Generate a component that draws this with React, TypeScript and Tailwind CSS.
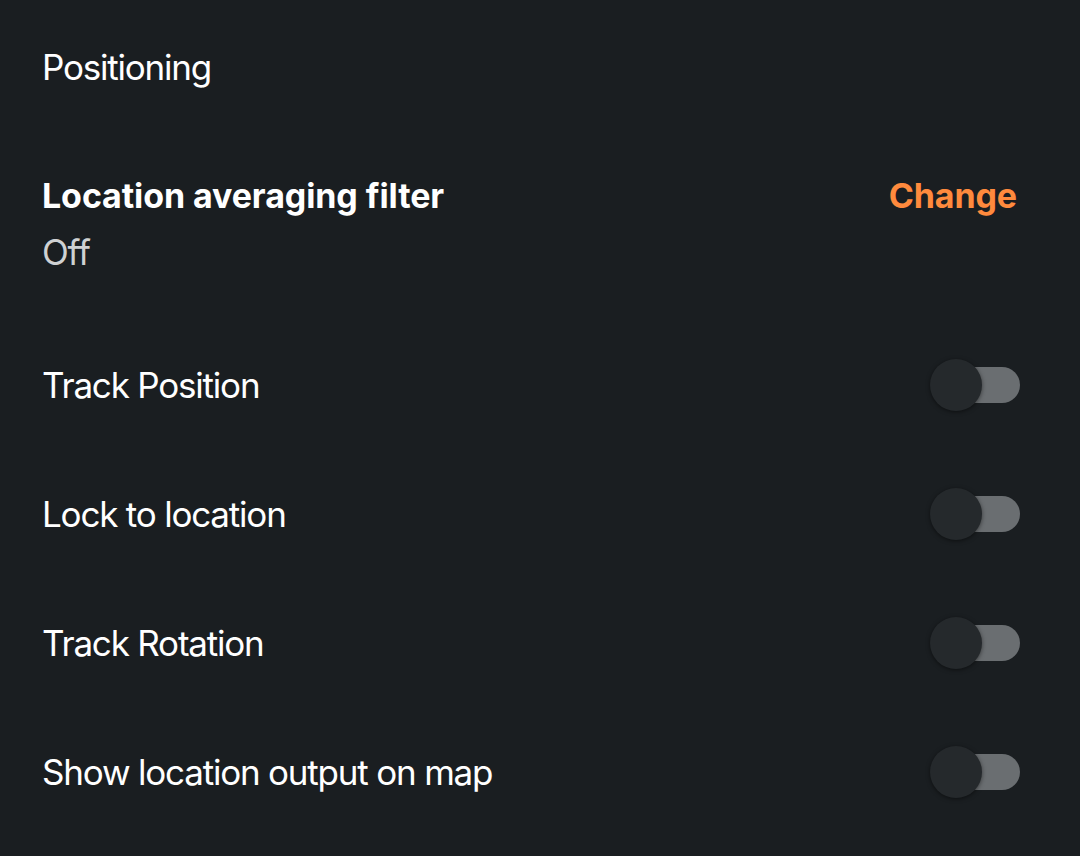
import React from "react";

function Toggle() {
  return (
    <div className="relative w-[90px] h-[54px] flex items-center">
      <div className="absolute left-[3px] right-0 h-[36px] rounded-full bg-[#6a6e71]" />
      <div className="absolute left-0 w-[52px] h-[52px] rounded-full bg-[#25292c] shadow-[0_1px_4px_rgba(0,0,0,0.5)]" />
    </div>
  );
}

const rows = ["Track Position", "Lock to location", "Track Rotation", "Show location output on map"];

export default function App() {
  return (
    <div
      className="w-[1080px] h-[856px] bg-[#1a1e21] text-white overflow-hidden"
      style={{ fontFamily: "Inter, 'Noto Sans', sans-serif" }}
    >
      <div className="h-[134px] flex items-center pl-[42px]">
        <span className="text-[35px] leading-[40px] tracking-[-1.2px]">Positioning</span>
      </div>
      <div className="h-[186px] pl-[42px] pr-[63px] pt-[42px]">
        <div className="flex justify-between items-center h-[40px]">
          <span className="text-[34px] font-bold leading-[40px] tracking-[-0.1px]">Location averaging filter</span>
          <span className="text-[34px] font-bold leading-[40px] tracking-[-0.1px] text-[#ff8a3d]">Change</span>
        </div>
        <div className="mt-[16px] h-[40px] flex items-center">
          <span className="text-[35px] leading-[40px] tracking-[-1.2px] text-[#cfd1d2]">Off</span>
        </div>
      </div>
      {rows.map((r) => (
        <div key={r} className="h-[129px] flex items-center justify-between pl-[42px] pr-[60px]">
          <span className="text-[35px] leading-[40px] tracking-[-1.2px]">{r}</span>
          <Toggle />
        </div>
      ))}
    </div>
  );
}
